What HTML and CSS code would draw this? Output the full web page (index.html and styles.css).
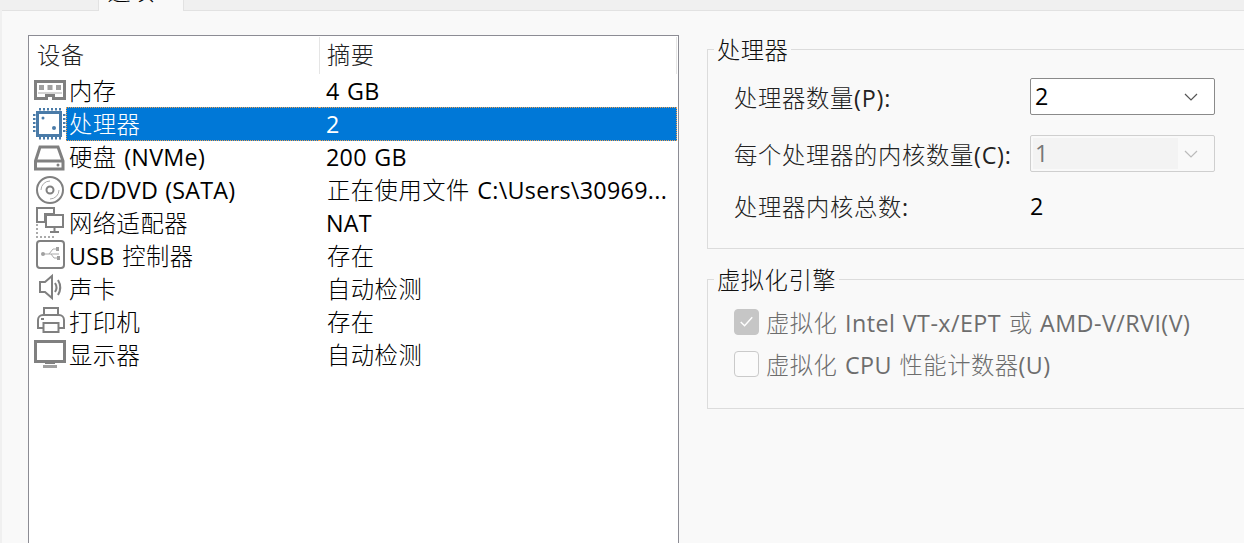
FILE: index.html
```html
<!DOCTYPE html>
<html lang="zh-CN">
<head>
    <meta charset="UTF-8">
    <title>处理器设置</title>
    <link rel="stylesheet" href="styles.css">
</head>
<body>
    <div class="tabs">
        <div class="tab"><span class="tab-label">选项</span></div>
    </div>
    <div class="main">
        <div class="devices">
            <div class="head">
                <div class="head-name">设备</div>
                <div class="head-summary">摘要</div>
            </div>
            <div class="row">
                <svg class="icon" viewBox="0 0 36 33"><path class="g3" d="M3.500 7.500h29v17h-11v-3h-7v3h-11z"/><path class="g1" d="M6 19h24"/><path class="soft" d="M7 11h5v5H7zM15.500 11h5v5h-5zM24 11h5v5h-5z"/></svg>
                <div class="name">内存</div>
                <div class="summary lat">4 GB</div>
            </div>
            <div class="row selected">
                <svg class="icon" viewBox="0 0 36 33"><rect x="5.500" y="5.500" width="23" height="23" fill="#fff" stroke="#4a7ba8" stroke-width="3"/><path d="M8 1v2.500M12 1v2.500M16 1v2.500M20 1v2.500M24 1v2.500M28 1v2.500M8 30v2.500M12 30v2.500M16 30v2.500M20 30v2.500M24 30v2.500M28 30v2.500M1 8h2.500M1 12h2.500M1 16h2.500M1 20h2.500M1 24h2.500M31 8h2.500M31 12h2.500M31 16h2.500M31 20h2.500M31 24h2.500" stroke="#4a7ba8" stroke-width="2" fill="none"/><circle cx="11" cy="11" r="1.500" fill="#4a7ba8"/><circle cx="22" cy="21" r="2" fill="#4a7ba8"/></svg>
                <div class="name">处理器</div>
                <div class="summary lat">2</div>
            </div>
            <div class="row">
                <svg class="icon" viewBox="0 0 36 33"><path class="g3" d="M3.500 21 8 7h18l5 14v8H3.500z"/><path class="g3" d="M3.500 21h27.500"/><circle class="fill" cx="26" cy="25" r="1.500"/></svg>
                <div class="name">硬盘 <span class="lat">(NVMe)</span></div>
                <div class="summary lat">200 GB</div>
            </div>
            <div class="row">
                <svg class="icon" viewBox="0 0 36 33"><circle class="g2" cx="18" cy="17" r="13"/><circle class="g2" cx="18" cy="17" r="3.500"/><path class="g1" d="M18 8a9 9 0 0 0-9 9M18 26a9 9 0 0 0 9-9"/></svg>
                <div class="name lat tight">CD/DVD (SATA)</div>
                <div class="summary">正在使用文件 <span class="lat">C:\Users\30969...</span></div>
            </div>
            <div class="row">
                <svg class="icon" viewBox="0 0 36 33"><path class="g2" d="M5 2h17v6H13v8H5z"/><path class="g2" d="M14 9h17v12H14z"/><path class="g2" d="M22.500 21v4M18 26h9"/><path class="dots" d="M5 18v13h18"/></svg>
                <div class="name">网络适配器</div>
                <div class="summary lat">NAT</div>
            </div>
            <div class="row">
                <svg class="icon" viewBox="0 0 36 33"><rect class="g2" x="5" y="2" width="27" height="27" rx="3"/><path class="g1" d="M11 15h16M17 15l4-5h3M19 15l3 4h3"/><circle class="soft" cx="11" cy="15" r="2"/><path class="soft" d="M24 8h3v4h-3zM25 17h3v4h-3z"/></svg>
                <div class="name"><span class="lat">USB</span> 控制器</div>
                <div class="summary">存在</div>
            </div>
            <div class="row">
                <svg class="icon" viewBox="0 0 36 33"><path class="g2" d="M8 10h5l7-6v22l-7-6H8z"/><path class="g2" d="M23 11c2 3 2 6 0 9M26 8c3 5 3 10 0 15"/></svg>
                <div class="name">声卡</div>
                <div class="summary">自动检测</div>
            </div>
            <div class="row">
                <svg class="icon" viewBox="0 0 36 33"><path class="g2" d="M12 10V3h14v7"/><path class="g2" d="M11 23H6v-8a5 5 0 0 1 5-5h16a5 5 0 0 1 5 5v8h-5"/><path class="g2" d="M11.500 18h15v9h-15z"/><path class="fill" d="M9 13h3v2H9z"/></svg>
                <div class="name">打印机</div>
                <div class="summary">存在</div>
            </div>
            <div class="row">
                <svg class="icon" viewBox="0 0 36 33"><path class="g3" d="M3.500 3.500h29v20h-29z"/><path class="fill" d="M13 25h10v1H13z"/><path class="soft" d="M11 27h14v3H11z"/></svg>
                <div class="name">显示器</div>
                <div class="summary">自动检测</div>
            </div>
        </div>
        <div class="side">
            <fieldset class="group group-cpu">
                <legend>处理器</legend>
                <div class="field">
                    <div class="label">处理器数量<span class="lat">(P):</span></div>
                    <div class="select">
                        <span class="select-value lat">2</span>
                        <svg class="chevron" viewBox="0 0 14 8"><path d="M1 1l6 6 6-6"/></svg>
                    </div>
                </div>
                <div class="field">
                    <div class="label">每个处理器的内核数量<span class="lat">(C):</span></div>
                    <div class="select disabled">
                        <span class="select-value lat">1</span>
                        <svg class="chevron" viewBox="0 0 14 8"><path d="M1 1l6 6 6-6"/></svg>
                    </div>
                </div>
                <div class="field field-total">
                    <div class="label">处理器内核总数<span class="lat">:</span></div>
                    <div class="lat">2</div>
                </div>
            </fieldset>
            <fieldset class="group group-engine">
                <legend>虚拟化引擎</legend>
                <div class="check">
                    <span class="box checked"><svg viewBox="0 0 24 24"><path d="M6 12.500l4 4 8-9"/></svg></span>
                    <span class="check-label">虚拟化 <span class="lat">Intel VT-x/EPT</span> 或 <span class="lat">AMD-V/RVI(V)</span></span>
                </div>
                <div class="check">
                    <span class="box"></span>
                    <span class="check-label">虚拟化 <span class="lat">CPU</span> 性能计数器<span class="lat">(U)</span></span>
                </div>
            </fieldset>
        </div>
    </div>
</body>
</html>
```

FILE: styles.css
```css
* {
    margin: 0;
    padding: 0;
    box-sizing: border-box;
    font-family: 'Open Sans', 'Noto Sans CJK SC', sans-serif;
}

html, body {
    height: 543px;
    overflow: hidden;
}

body {
    background-color: #f9f9f9;
    color: #000;
    font-size: 23.3px;
    font-weight: 300;
    letter-spacing: 0.5px;
    word-spacing: 1px;
    border-left: 2px solid #f0f0f0;
}

/* latin runs are a bit heavier than the chinese text around them */
.lat {
    font-weight: 400;
    letter-spacing: 0.3px;
}

.tight {
    letter-spacing: 0.2px;
}

/* tab strip, cut off by the top of the window */
.tabs {
    height: 11px;
    padding-left: 96px;
    background-color: #f0f0f0;
    border-bottom: 1px solid #e2e2e2;
}

.tab {
    width: 86px;
    height: 11px;
    overflow: hidden;
    text-align: center;
    background-color: #f9f9f9;
    border-left: 1px solid #e2e2e2;
    border-right: 1px solid #e2e2e2;
}

.tab-label {
    display: block;
    line-height: 33px;
    margin-top: -25px;
    padding-right: 20px;
}

.main {
    display: flex;
    align-items: flex-start;
    padding: 24px 0 0 26px;
}

/* device list */
.devices {
    flex: none;
    width: 651px;
    height: 520px;
    background-color: #fff;
    border: 1px solid #8c8c94;
    border-bottom: none;
}

.head {
    display: grid;
    grid-template-columns: 290px 358px;
    height: 38px;
    padding-top: 1px;
    color: #222;
}

.head-name {
    padding-left: 8px;
    line-height: 37px;
}

.head-summary {
    padding-left: 7px;
    line-height: 37px;
    border-left: 1px solid #e5e5e5;
    border-right: 1px solid #e5e5e5;
}

.row {
    display: grid;
    grid-template-columns: 3px 34px 253px 358px;
    height: 33px;
    line-height: 34px;
}

/* the icon is 2px wider than its column, it runs up to the selection */
.icon {
    grid-column: 2;
    width: 36px;
    height: 33px;
}

.name {
    padding-left: 3px;
    white-space: nowrap;
}

.summary {
    padding-left: 8px;
    white-space: nowrap;
}

.summary.lat {
    padding-left: 7px;
}

.selected .name,
.selected .summary {
    background-color: #0078d7;
    color: #fff;
    border-top: 1px dotted #f0a050;
    border-bottom: 1px dotted #f0a050;
    line-height: 32px;
}

.selected .name {
    border-left: 1px dotted #f0a050;
    padding-left: 2px;
}

.selected .summary {
    border-right: 1px dotted #f0a050;
}

.g1, .g2, .g3, .dots {
    fill: none;
    stroke: #808080;
}

.g1 { stroke-width: 1; stroke: #aaa; }
.g2 { stroke-width: 2; }
.g3 { stroke-width: 3; }
.dots { stroke-width: 2; stroke-dasharray: 2 2; stroke: #aaa; }
.fill { fill: #808080; }
.soft { fill: #a0a0a0; }

/* settings on the right */
.side {
    flex: none;
    width: 560px;
    margin-left: 28px;
}

.group {
    border: 1px solid #dcdcdc;
    border-right: none;
    padding-left: 26px;
}

.group legend {
    margin-left: -20px;
    padding: 2px 3px 0;
    line-height: 33px;
    color: #111;
}

.group-cpu {
    height: 217px;
    margin-top: -3px;
}

.group-engine {
    height: 147px;
    margin-top: 13px;
}

.field {
    display: grid;
    grid-template-columns: 296px 185px;
    align-items: center;
    height: 37px;
    margin-top: 20px;
}

.field:first-of-type {
    margin-top: 11px;
}

.field-total {
    margin-top: 17px;
    height: 33px;
}

.label {
    white-space: nowrap;
    color: #222;
    letter-spacing: 0.7px;
}

.label .lat {
    letter-spacing: 0.8px;
}

.select {
    display: flex;
    justify-content: space-between;
    align-items: center;
    height: 37px;
    padding: 0 16px 2px 4px;
    background-color: #fff;
    border: 1px solid #8a8a8a;
    border-radius: 2px;
}

.select.disabled {
    position: relative;
    background-color: #f9f9f9;
    border-color: #cfcfcf;
    color: #777;
}

.select.disabled::before {
    content: "";
    position: absolute;
    left: 2px;
    top: 2px;
    bottom: 2px;
    width: 145px;
    background-color: #f3f3f3;
}

.select.disabled .select-value {
    position: relative;
}

.chevron {
    width: 14px;
    height: 8px;
    margin-top: 2px;
    fill: none;
    stroke: #555;
    stroke-width: 1.2;
}

.disabled .chevron {
    stroke: #bbb;
}

.check {
    display: flex;
    align-items: center;
    gap: 7px;
    height: 26px;
    color: #6d6d6d;
    white-space: nowrap;
}

.check:first-of-type {
    margin-top: 12px;
}

.check + .check {
    margin-top: 16px;
}

.check .lat {
    letter-spacing: 0.45px;
}

.box {
    flex: none;
    width: 25px;
    height: 26px;
    background-color: #fbfbfb;
    border: 1px solid #cacaca;
    border-radius: 4px;
}

.box.checked {
    background-color: #c6c6c6;
    border-color: #c6c6c6;
}

.box svg {
    display: block;
    fill: none;
    stroke: #fff;
    stroke-width: 1.5;
}
```
